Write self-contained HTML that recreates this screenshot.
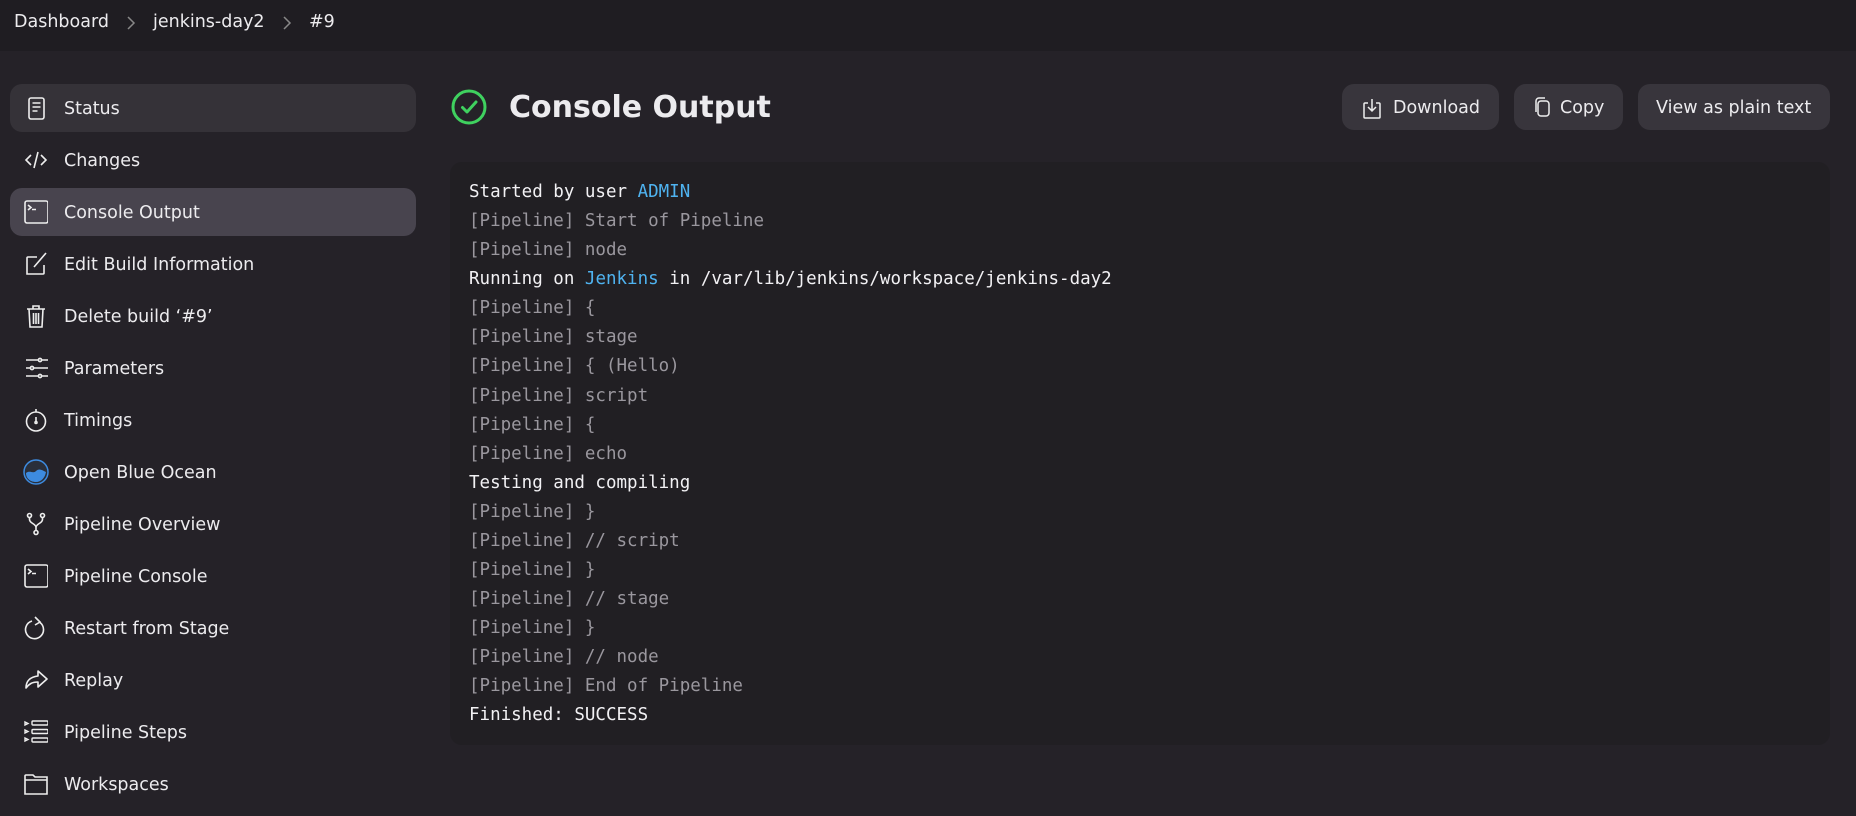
<!DOCTYPE html>
<html><head><meta charset="utf-8"><style>
*{box-sizing:border-box;margin:0;padding:0}
body{width:1856px;height:816px;overflow:hidden;background:#252228;font-family:"DejaVu Sans","Liberation Sans",sans-serif;color:#ecebee;position:relative}
.hdr{position:absolute;left:0;top:0;width:1856px;height:51px;background:#1f1d22;font-size:17.5px}
.hdr span{position:absolute;top:12px}
.hdr svg{position:absolute;top:15px}
.item{position:absolute;left:10px;width:406px;height:48px;border-radius:12px;font-size:17.5px;line-height:50px;padding-left:54px}
.item svg{position:absolute;left:14px;top:12px}
.title{position:absolute;left:509px;top:90px;font-size:30px;font-weight:bold}
.btn{position:absolute;top:84px;height:46px;border-radius:12px;background:#38353c;font-size:17.5px;line-height:48px}
.box{position:absolute;left:450px;top:162px;width:1380px;height:583px;background:#211f23;border-radius:12px}
.con{position:absolute;left:469px;top:178px;font-family:"DejaVu Sans Mono","Liberation Mono",monospace;font-size:17.5px;line-height:29.08px;color:#9a979e;white-space:pre}
.w{color:#f2f1f4}.b{color:#4fb3f0}
</style></head><body>
<div class="hdr"><span style="left:14px">Dashboard</span><svg style="left:126px" width="10" height="16" viewBox="0 0 10 16" fill="none" stroke="#888" stroke-width="1.5"><path d="M2 2l6 6-6 6"/></svg><span style="left:153px">jenkins-day2</span><svg style="left:282px" width="10" height="16" viewBox="0 0 10 16" fill="none" stroke="#888" stroke-width="1.5"><path d="M2 2l6 6-6 6"/></svg><span style="left:309px">#9</span></div>

<div class="item" style="top:84px;background:#353238"><svg width="24" height="24" viewBox="0 0 24 24" fill="none" stroke="#eee" stroke-width="1.6"><rect x="5" y="2" width="15" height="21" rx="2"/><path d="M8.5 7h8M8.5 11h8M8.5 15h5"/></svg>Status</div>
<div class="item" style="top:136px"><svg width="24" height="24" viewBox="0 0 24 24" fill="none" stroke="#eee" stroke-width="1.6"><path d="M7 7l-5 5 5 5M17 7l5 5-5 5M14 4l-4 16"/></svg>Changes</div>
<div class="item" style="top:188px;background:#48444e"><svg width="24" height="24" viewBox="0 0 24 24" fill="none" stroke="#eee" stroke-width="1.6"><rect x="1" y="1" width="23" height="22" rx="2"/><path d="M4 5l3 2.5-3 2.5M8 9.5h4"/></svg>Console Output</div>
<div class="item" style="top:240px"><svg width="24" height="24" viewBox="0 0 24 24" fill="none" stroke="#eee" stroke-width="1.6"><path d="M13 5H4a1 1 0 0 0-1 1v16h16a1 1 0 0 0 1-1v-8"/><path d="M10 15L22 1"/></svg>Edit Build Information</div>
<div class="item" style="top:292px"><svg width="24" height="24" viewBox="0 0 24 24" fill="none" stroke="#eee" stroke-width="1.6"><path d="M3 5h18M9 5V2h6v3M5 5l1 18h12l1-18M9.5 9v11M12 9v11M14.5 9v11"/></svg>Delete build ‘#9’</div>
<div class="item" style="top:344px"><svg width="24" height="24" viewBox="0 0 24 24" fill="none" stroke="#eee" stroke-width="1.6"><path d="M2 4h22M2 12h22M2 20h22"/><circle cx="16" cy="4" r="1.6" fill="#252228"/><circle cx="8" cy="12" r="1.6" fill="#252228"/><circle cx="16" cy="20" r="1.6" fill="#252228"/></svg>Parameters</div>
<div class="item" style="top:396px"><svg width="24" height="24" viewBox="0 0 24 24" fill="none" stroke="#eee" stroke-width="1.6"><circle cx="12" cy="13.5" r="9.5"/><path d="M12 1v3M12 9v5"/><circle cx="12" cy="14.5" r="1"/></svg>Timings</div>
<div class="item" style="top:448px"><svg width="26" height="26" viewBox="0 0 26 26" style="left:13px;top:11px"><circle cx="13" cy="13" r="12" fill="#2a2f3a" stroke="#3d8be0" stroke-width="1.5"/><path d="M3 14c4-3 7 1 10-2s6-1 10 1c-1 6-5 10-10 10S3 20 3 14z" fill="#3d8be0"/></svg>Open Blue Ocean</div>
<div class="item" style="top:500px"><svg width="24" height="24" viewBox="0 0 24 24" fill="none" stroke="#eee" stroke-width="1.6"><circle cx="5.5" cy="3.5" r="2"/><circle cx="18.5" cy="3.5" r="2"/><circle cx="12" cy="20.5" r="2"/><path d="M5.5 5.5v2c0 4 6.5 4 6.5 8v3M18.5 5.5v2c0 4-6.5 4-6.5 8"/></svg>Pipeline Overview</div>
<div class="item" style="top:552px"><svg width="24" height="24" viewBox="0 0 24 24" fill="none" stroke="#eee" stroke-width="1.6"><rect x="1" y="1" width="23" height="22" rx="2"/><path d="M4 5l3 2.5-3 2.5M8 9.5h4"/></svg>Pipeline Console</div>
<div class="item" style="top:604px"><svg width="24" height="24" viewBox="0 0 24 24" fill="none" stroke="#eee" stroke-width="1.6"><path d="M16 6.5A9 9 0 1 1 8 5"/><path d="M11 1l5 5-5 3"/></svg>Restart from Stage</div>
<div class="item" style="top:656px"><svg width="24" height="24" viewBox="0 0 24 24" fill="none" stroke="#eee" stroke-width="1.6"><path d="M14 3l9 8-9 8v-5c-6 0-9 2-12 6 0-7 4-11 12-12z" stroke-linejoin="round"/></svg>Replay</div>
<div class="item" style="top:708px"><svg width="24" height="24" viewBox="0 0 24 24" fill="none" stroke="#eee" stroke-width="1.4"><path d="M1 2l3 1.5L1 5zM1 10l3 1.5L1 13zM1 18l3 1.5L1 21z"/><rect x="8" y="1" width="16" height="4" rx="1"/><rect x="8" y="9.5" width="16" height="4" rx="1"/><rect x="8" y="18" width="16" height="4" rx="1"/></svg>Pipeline Steps</div>
<div class="item" style="top:760px"><svg width="24" height="24" viewBox="0 0 24 24" fill="none" stroke="#eee" stroke-width="1.6"><path d="M1 4a1 1 0 0 1 1-1h7l2 2h12v17H1z"/><path d="M1 8h22"/></svg>Workspaces</div>

<svg style="position:absolute;left:451px;top:89px" width="36" height="36" viewBox="0 0 36 36" fill="none" stroke="#3fd15f" stroke-width="3"><circle cx="18" cy="18" r="16"/><path d="M11.5 18.5l4.5 4.5 9-10" stroke-linecap="round" stroke-linejoin="round"/></svg>
<div class="title">Console Output</div>

<div class="btn" style="left:1342px;width:157px"><svg style="position:absolute;left:20px;top:13px" width="20" height="22" viewBox="0 0 20 22" fill="none" stroke="#eee" stroke-width="1.5"><path d="M6 6H3a1 1 0 0 0-1 1v13a1 1 0 0 0 1 1h14a1 1 0 0 0 1-1V7a1 1 0 0 0-1-1h-3M10 2v12M6 10l4 4 4-4"/></svg><span style="position:absolute;left:51px">Download</span></div>
<div class="btn" style="left:1514px;width:109px"><svg style="position:absolute;left:18px;top:12px" width="20" height="22" viewBox="0 0 20 22" fill="none" stroke="#eee" stroke-width="1.5"><rect x="6" y="5" width="11" height="15" rx="3"/><path d="M4 16V5a3 3 0 0 1 3-3h6"/></svg><span style="position:absolute;left:46px">Copy</span></div>
<div class="btn" style="left:1638px;width:192px"><span style="position:absolute;left:18px">View as plain text</span></div>

<div class="box"></div>
<div class="con"><span class="w">Started by user <span class="b">ADMIN</span></span>
[Pipeline] Start of Pipeline
[Pipeline] node
<span class="w">Running on <span class="b">Jenkins</span> in /var/lib/jenkins/workspace/jenkins-day2</span>
[Pipeline] {
[Pipeline] stage
[Pipeline] { (Hello)
[Pipeline] script
[Pipeline] {
[Pipeline] echo
<span class="w">Testing and compiling</span>
[Pipeline] }
[Pipeline] // script
[Pipeline] }
[Pipeline] // stage
[Pipeline] }
[Pipeline] // node
[Pipeline] End of Pipeline
<span class="w">Finished: SUCCESS</span></div>
</body></html>
